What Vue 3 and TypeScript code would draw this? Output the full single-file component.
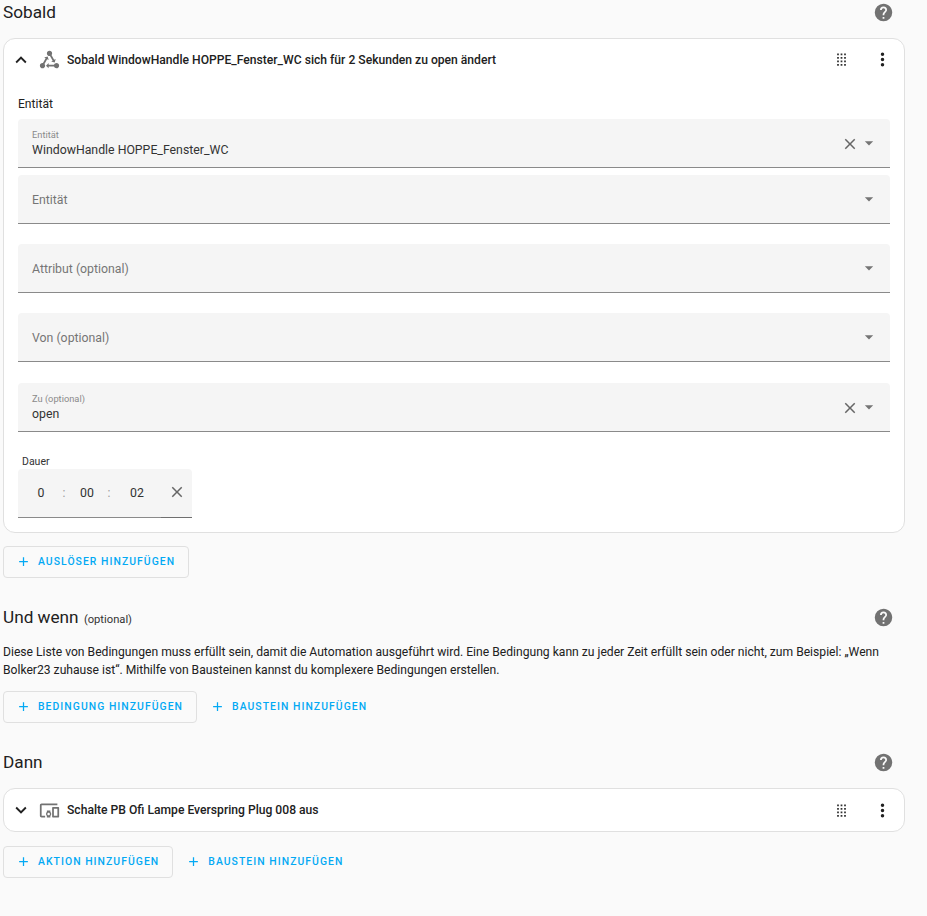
<script setup lang="ts">
const P = {
  help: 'M15.07,11.25L14.17,12.17C13.45,12.89 13,13.5 13,15H11V14.5C11,13.39 11.45,12.39 12.17,11.67L13.41,10.41C13.78,10.05 14,9.55 14,9C14,7.89 13.1,7 12,7A2,2 0 0,0 10,9H8A4,4 0 0,1 12,5A4,4 0 0,1 16,9C16,9.88 15.64,10.67 15.07,11.25M13,19H11V17H13M12,2A10,10 0 0,0 2,12A10,10 0 0,0 12,22A10,10 0 0,0 22,12C22,6.47 17.5,2 12,2Z',
  dots: 'M12,16A2,2 0 0,1 14,18A2,2 0 0,1 12,20A2,2 0 0,1 10,18A2,2 0 0,1 12,16M12,10A2,2 0 0,1 14,12A2,2 0 0,1 12,14A2,2 0 0,1 10,12A2,2 0 0,1 12,10M12,4A2,2 0 0,1 14,6A2,2 0 0,1 12,8A2,2 0 0,1 10,6A2,2 0 0,1 12,4Z',
  drag: 'M7,19V17H9V19H7M11,19V17H13V19H11M15,19V17H17V19H15M7,15V13H9V15H7M11,15V13H13V15H11M15,15V13H17V15H15M7,11V9H9V11H7M11,11V9H13V11H11M15,11V9H17V11H15M7,7V5H9V7H7M11,7V5H13V7H11M15,7V5H17V7H15Z',
  up: 'M7.41,15.41L12,10.83L16.59,15.41L18,14L12,8L6,14L7.41,15.41Z',
  down: 'M7.41,8.58L12,13.17L16.59,8.58L18,10L12,16L6,10L7.41,8.58Z',
  close: 'M19,6.41L17.59,5L12,10.59L6.41,5L5,6.41L10.59,12L5,17.59L6.41,19L12,13.41L17.59,19L19,17.59L13.41,12L19,6.41Z',
  menu: 'M7,10L12,15L17,10H7Z',
  plus: 'M19,13H13V19H11V13H5V11H11V5H13V11H19V13Z',
  state: 'M6.27 17.05C6.72 17.58 7 18.25 7 19C7 20.66 5.66 22 4 22S1 20.66 1 19 2.34 16 4 16C4.18 16 4.36 16 4.53 16.05L7.6 10.69L5.86 9.7L9.95 8.58L11.07 12.67L9.33 11.68L6.27 17.05M20 16C18.7 16 17.6 16.84 17.18 18H11V16L8 19L11 22V20H17.18C17.6 21.16 18.7 22 20 22C21.66 22 23 20.66 23 19S21.66 16 20 16M12 8C12.18 8 12.36 8 12.53 7.95L15.6 13.31L13.86 14.3L17.95 15.42L19.07 11.33L17.33 12.32L14.27 6.95C14.72 6.42 15 5.75 15 5C15 3.34 13.66 2 12 2S9 3.34 9 5 10.34 8 12 8Z',
  devices: 'M3 6H21V4H3C1.9 4 1 4.9 1 6V18C1 19.1 1.9 20 3 20H7V18H3V6M13 12H9V13.78C8.39 14.33 8 15.11 8 16C8 16.89 8.39 17.67 9 18.22V20H13V18.22C13.61 17.67 14 16.88 14 16S13.61 14.33 13 13.78V12M11 17.5C10.17 17.5 9.5 16.83 9.5 16S10.17 14.5 11 14.5 12.5 15.17 12.5 16 11.83 17.5 11 17.5M22 8H16C15.5 8 15 8.5 15 9V19C15 19.5 15.5 20 16 20H22C22.5 20 23 19.5 23 19V9C23 8.5 22.5 8 22 8M21 18H17V10H21V18Z',
}
const fields = [
  { label: 'Entität', value: 'WindowHandle HOPPE_Fenster_WC', gap: 7 },
  { label: 'Entität', value: '', gap: 20 },
  { label: 'Attribut (optional)', value: '', gap: 20 },
  { label: 'Von (optional)', value: '', gap: 21 },
  { label: 'Zu (optional)', value: 'open', gap: 0 },
]
</script>

<template>
  <div class="page">
    <header class="head head-first">
      <h2>Sobald</h2>
      <svg class="help" viewBox="0 0 24 24"><path :d="P.help" /></svg>
    </header>

    <section class="card">
      <div class="row">
        <svg class="chev" viewBox="0 0 24 24"><path :d="P.up" /></svg>
        <svg class="lead" viewBox="0 0 24 24"><path :d="P.state" /></svg>
        <span class="row-title">Sobald WindowHandle HOPPE_Fenster_WC sich für 2 Sekunden zu open ändert</span>
        <svg class="drag" viewBox="0 0 24 24"><path :d="P.drag" /></svg>
        <svg class="more" viewBox="0 0 24 24"><path :d="P.dots" /></svg>
      </div>
      <div class="body">
        <div class="body-label">Entität</div>
        <div
          v-for="(f, i) in fields"
          :key="i"
          class="field"
          :style="{ marginBottom: f.gap + 'px' }"
        >
          <div v-if="f.value" class="text">
            <span class="small">{{ f.label }}</span>
            <span class="value">{{ f.value }}</span>
          </div>
          <span v-else class="placeholder">{{ f.label }}</span>
          <svg v-if="f.value" class="clear" viewBox="0 0 24 24"><path :d="P.close" /></svg>
          <svg class="caret" viewBox="0 0 24 24"><path :d="P.menu" /></svg>
        </div>
        <div class="dur-label">Dauer</div>
        <div class="duration">
          <span class="num n1">0</span>
          <span class="sep s1">:</span>
          <span class="num n2">00</span>
          <span class="sep s2">:</span>
          <span class="num n3">02</span>
          <svg class="dur-clear" viewBox="0 0 24 24"><path :d="P.close" /></svg>
        </div>
      </div>
    </section>

    <div class="actions act-1">
      <button class="btn outlined"><svg viewBox="0 0 24 24"><path :d="P.plus" /></svg>Auslöser hinzufügen</button>
    </div>

    <header class="head head-2">
      <h2>Und wenn <small>(optional)</small></h2>
      <svg class="help" viewBox="0 0 24 24"><path :d="P.help" /></svg>
    </header>
    <p class="desc">Diese Liste von Bedingungen muss erfüllt sein, damit die Automation ausgeführt wird. Eine Bedingung kann zu jeder Zeit erfüllt sein oder nicht, zum Beispiel: „Wenn Bolker23 zuhause ist“. Mithilfe von Bausteinen kannst du komplexere Bedingungen erstellen.</p>
    <div class="actions act-2">
      <button class="btn outlined"><svg viewBox="0 0 24 24"><path :d="P.plus" /></svg>Bedingung hinzufügen</button>
      <button class="btn"><svg viewBox="0 0 24 24"><path :d="P.plus" /></svg>Baustein hinzufügen</button>
    </div>

    <header class="head head-3">
      <h2>Dann</h2>
      <svg class="help" viewBox="0 0 24 24"><path :d="P.help" /></svg>
    </header>
    <section class="card card-small">
      <div class="row">
        <svg class="chev" viewBox="0 0 24 24"><path :d="P.down" /></svg>
        <svg class="lead" viewBox="0 0 24 24"><path :d="P.devices" /></svg>
        <span class="row-title">Schalte PB Ofi Lampe Everspring Plug 008 aus</span>
        <svg class="drag" viewBox="0 0 24 24"><path :d="P.drag" /></svg>
        <svg class="more" viewBox="0 0 24 24"><path :d="P.dots" /></svg>
      </div>
    </section>
    <div class="actions act-3">
      <button class="btn outlined"><svg viewBox="0 0 24 24"><path :d="P.plus" /></svg>Aktion hinzufügen</button>
      <button class="btn"><svg viewBox="0 0 24 24"><path :d="P.plus" /></svg>Baustein hinzufügen</button>
    </div>
  </div>
</template>

<style>
html, body { background: #fafafa; margin: 0; }
</style>

<style scoped>
.page {
  width: 927px;
  height: 916px;
  box-sizing: border-box;
  background: #fafafa;
  font-family: Roboto, "Liberation Sans", sans-serif;
  color: #212121;
  overflow: hidden;
}
.head {
  width: 894px;
  box-sizing: border-box;
  padding-left: 3px;
  display: flex;
  align-items: center;
  justify-content: space-between;
  height: 24px;
}
.head-first { margin-bottom: 14px; }
.head-2 { margin-top: 27px; }
.head-3 { margin-top: 27.5px; }
h2 { margin: 0; font-size: 17.2px; font-weight: 400; line-height: 24px; }
h2 small { font-size: 11.2px; color: #333; margin-left: 1px; }
.head-2 h2 { padding-top: 2px; }
.head-3 h2 { margin-bottom: 2px; }
.help { width: 21px; height: 21px; fill: #727272; }
.card {
  margin-left: 3px;
  width: 902px;
  box-sizing: border-box;
  height: 495px;
  background: #fff;
  border: 1px solid #e0e0e0;
  border-radius: 12px;
}
.card-small { height: 44px; margin-top: 13.5px; }
.row {
  height: 41px;
  display: flex;
  align-items: center;
  padding-left: 6px;
}
.card-small .row { height: 42px; }
.chev { width: 22px; height: 22px; fill: #212121; flex: none; }
.lead { width: 21px; height: 21px; fill: #727272; margin-left: 7px; flex: none; }
.row-title { margin-left: 7px; font-size: 12.14px; font-weight: 500; flex: 1; }
.drag { width: 21px; height: 21px; fill: #333; flex: none; margin-right: 20px; }
.more { width: 21px; height: 21px; fill: #212121; flex: none; margin-right: 11px; }
.body { padding: 0 14px; }
.body-label { font-size: 12.1px; height: 16px; line-height: 16px; margin-top: 16px; margin-bottom: 7px; }
.field {
  height: 49px;
  box-sizing: border-box;
  background: #f5f5f5;
  border-bottom: 1px solid #8a8a8a;
  border-radius: 4px 4px 0 0;
  display: flex;
  align-items: center;
  padding: 0 11px 0 14px;
}
.text { flex: 1; display: flex; flex-direction: column; margin-top: 1px; }
.small { font-size: 9.3px; line-height: 12px; color: #8a8a8a; }
.value { font-size: 12.3px; line-height: 16px; margin-top: 1px; color: #333; }
.placeholder { flex: 1; font-size: 12.3px; color: #757575; padding-top: 2px; }
.clear { width: 18px; height: 18px; fill: #666; flex: none; margin-top: 1px; }
.caret { width: 20px; height: 20px; fill: #757575; flex: none; margin-top: -1px; }
.dur-label { font-size: 10.5px; line-height: 14px; margin-top: 23px; padding-left: 4px; color: #333; }
.duration {
  position: relative;
  width: 174px;
  height: 49px;
  box-sizing: border-box;
  background: #f5f5f5;
  border-bottom: 1px solid #8a8a8a;
  border-radius: 4px 4px 0 0;
  display: flex;
  align-items: center;
  padding-left: 14px;
  font-size: 12.3px;
  color: #333;
}
.duration::after {
  content: "";
  position: absolute;
  left: 143px;
  right: 0;
  bottom: -1px;
  height: 1px;
  background: #6f6f6f;
}
.num { text-align: center; flex: none; }
.n1 { width: 18px; }
.n2 { width: 16px; margin-left: 11px; }
.n3 { width: 16px; margin-left: 16px; }
.sep { color: #9a9a9a; font-size: 12px; width: 8px; text-align: center; margin-left: 10px; flex: none; }
.dur-clear { width: 18px; height: 18px; fill: #666; flex: none; margin-left: 22.6px; margin-top: -2px; }
.actions { margin-left: 3px; display: flex; align-items: center; }
.act-1 { margin-top: 13px; }
.act-2 { margin-top: 12px; }
.act-3 { margin-top: 14px; }
.btn {
  height: 32px;
  box-sizing: border-box;
  display: inline-flex;
  align-items: center;
  background: transparent;
  border: 1px solid transparent;
  border-radius: 4px;
  padding: 0 13px 1px 12px;
  font-family: inherit;
  font-size: 10.4px;
  font-weight: 500;
  letter-spacing: 1.05px;
  text-transform: uppercase;
  color: #03a9f4;
}
.btn.outlined { border-color: #e0e0e0; }
.btn svg { width: 15px; height: 15px; fill: #03a9f4; margin-right: 7px; flex: none; }
.desc {
  margin: 15px 0 0 3px;
  width: 890px;
  font-size: 12.13px;
  line-height: 17.5px;
  color: #212121;
}
</style>
